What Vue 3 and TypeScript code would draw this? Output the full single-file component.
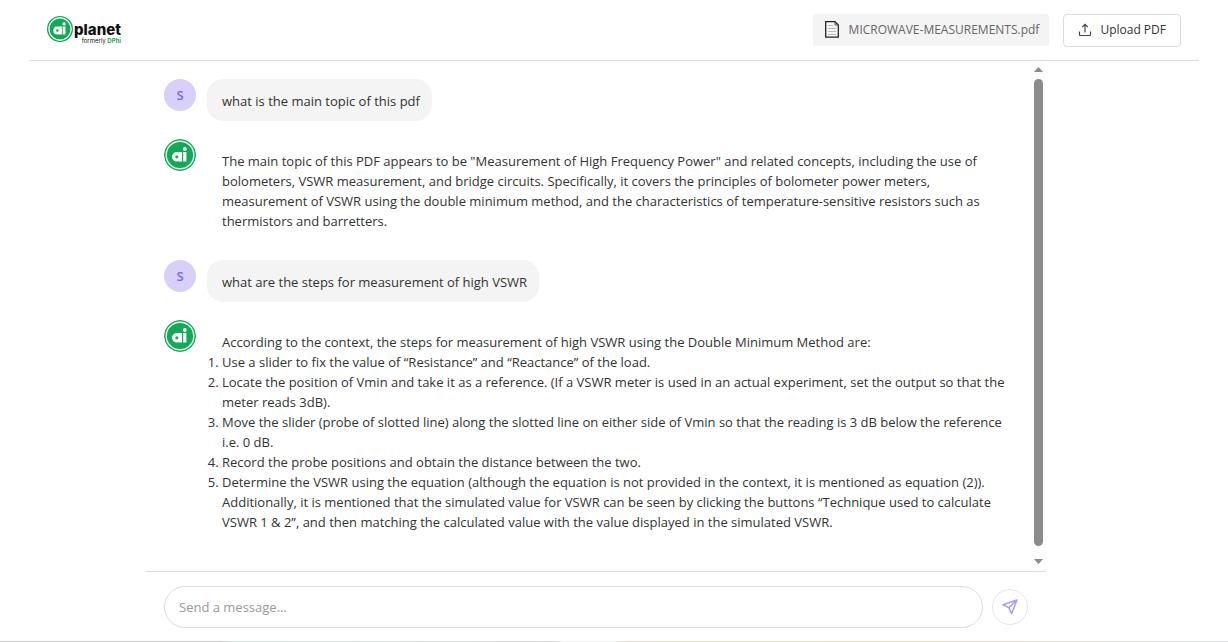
<script setup lang="ts">
import { ref } from 'vue'

interface Message {
  id: number
  from: 'user' | 'bot'
  text: string
  steps?: string[]
}

const draft = ref('')

const messages: Message[] = [
  { id: 1, from: 'user', text: 'what is the main topic of this pdf' },
  {
    id: 2,
    from: 'bot',
    text:
      'The main topic of this PDF appears to be "Measurement of High Frequency Power" and related concepts, including the use of\n' +
      'bolometers, VSWR measurement, and bridge circuits. Specifically, it covers the principles of bolometer power meters,\n' +
      'measurement of VSWR using the double minimum method, and the characteristics of temperature-sensitive resistors such as\n' +
      'thermistors and barretters.',
  },
  { id: 3, from: 'user', text: 'what are the steps for measurement of high VSWR' },
  {
    id: 4,
    from: 'bot',
    text: 'According to the context, the steps for measurement of high VSWR using the Double Minimum Method are:',
    steps: [
      'Use a slider to fix the value of “Resistance” and “Reactance” of the load.',
      'Locate the position of Vmin and take it as a reference. (If a VSWR meter is used in an actual experiment, set the output so that the\nmeter reads 3dB).',
      'Move the slider (probe of slotted line) along the slotted line on either side of Vmin so that the reading is 3 dB below the reference\ni.e. 0 dB.',
      'Record the probe positions and obtain the distance between the two.',
      'Determine the VSWR using the equation (although the equation is not provided in the context, it is mentioned as equation (2)).\nAdditionally, it is mentioned that the simulated value for VSWR can be seen by clicking the buttons “Technique used to calculate\nVSWR 1 & 2”, and then matching the calculated value with the value displayed in the simulated VSWR.',
    ],
  },
]
</script>

<template>
  <div class="page">
    <header class="topbar">
      <a class="brand" href="#" aria-label="ai planet, formerly DPhi">
        <svg class="brand-mark" viewBox="0 0 32 32" aria-hidden="true">
          <circle cx="16" cy="16" r="16" fill="#14a958" />
          <circle cx="16" cy="16" r="13.6" fill="none" stroke="#fff" stroke-width="1.5" />
          <circle cx="12.8" cy="17.8" r="3.3" fill="none" stroke="#fff" stroke-width="3.4" />
          <path d="M16.6 12.8v10M21 12.8v10" stroke="#fff" stroke-width="3.4" />
          <circle cx="21" cy="9.8" r="2" fill="#fff" />
        </svg>
        <span class="brand-words">
          <span class="brand-name">planet</span>
          <span class="brand-sub">formerly <b>DPhi</b></span>
        </span>
      </a>
      <div class="actions">
        <div class="file">
          <svg width="14" height="17" viewBox="0 0 14 17" aria-hidden="true">
            <path d="M.7.7h9.3L13.3 4v12.2H.7z" fill="#f8f8f8" stroke="#222" stroke-width="1.3" />
            <path d="M10 1v3h3" fill="none" stroke="#555" />
            <path d="M3 4.5h5M3 7.5h8M3 10.5h8M3 13.5h8" stroke="#bbb" />
          </svg>
          <span>MICROWAVE-MEASUREMENTS.pdf</span>
        </div>
        <button class="upload" type="button">
          <svg width="14" height="14" viewBox="0 0 14 14" fill="none" stroke="#444" stroke-width="1.2" aria-hidden="true">
            <path d="M7 9.5V1.5M4.2 4.2L7 1.4l2.8 2.8M1.5 8.5v3.2q0 .8.8.8h9.4q.8 0 .8-.8V8.5" />
          </svg>
          <span>Upload PDF</span>
        </button>
      </div>
    </header>

    <main class="chat">
      <section class="history">
        <div class="messages">
          <article v-for="m in messages" :key="m.id" class="message" :class="m.from">
            <span v-if="m.from === 'user'" class="avatar">S</span>
            <svg v-else class="avatar" viewBox="0 0 32 32" aria-hidden="true">
              <circle cx="16" cy="16" r="16" fill="#14a958" />
              <circle cx="16" cy="16" r="13.8" fill="none" stroke="#e8f7ee" stroke-width="1.4" />
              <circle cx="12.8" cy="17.8" r="3.2" fill="none" stroke="#fff" stroke-width="3.2" />
              <path d="M16.4 13v9.6M20.8 13v9.6" stroke="#fff" stroke-width="3.2" />
              <circle cx="20.8" cy="10" r="1.9" fill="#fff" />
            </svg>
            <div class="bubble">
              <p>{{ m.text }}</p>
              <ol v-if="m.steps">
                <li v-for="step in m.steps" :key="step">{{ step }}</li>
              </ol>
            </div>
          </article>
        </div>
        <div class="rail" aria-hidden="true">
          <svg width="9" height="5" viewBox="0 0 9 5"><path d="M4.5 0L9 5H0z" fill="#8b8b8b" /></svg>
          <div class="thumb"></div>
          <svg width="9" height="5" viewBox="0 0 9 5"><path d="M0 0h9L4.5 5z" fill="#8b8b8b" /></svg>
        </div>
      </section>

      <form class="composer" @submit.prevent>
        <input v-model="draft" type="text" placeholder="Send a message..." aria-label="Message" />
        <button class="send" type="submit" aria-label="Send">
          <svg width="16" height="16" viewBox="0 0 16 16" fill="none" stroke="#a99cff" stroke-width="1.5" stroke-linejoin="round" aria-hidden="true">
            <path d="M15 1L1 5.8l5.8 2.8L9.6 14.6zM15 1L6.800 8.6" />
          </svg>
        </button>
      </form>
    </main>
    <div class="edge" aria-hidden="true"></div>
  </div>
</template>

<style>
body {
  margin: 0;
  background: #fff;
}
</style>

<style scoped>
.page {
  display: flex;
  flex-direction: column;
  min-height: 100vh;
  font-family: 'Segoe UI', 'Open Sans', 'Noto Sans', sans-serif;
  font-size: 13px;
  line-height: 20px;
  color: #333;
}

.edge {
  height: 1px;
  background: linear-gradient(90deg, #c8c8c8 18%, #d5e3df 19%, #d5d5d5 45%, #eee 46%, #eee 50%, #e4dfcc 51%, #e4dbc8 75%, #d8dcde);
}

.topbar {
  display: flex;
  justify-content: space-between;
  align-items: center;
  height: 60px;
  margin: 0 29px;
  padding: 0 18px;
  border-bottom: 1px solid #ddd;
}

.brand {
  display: flex;
  gap: 1px;
  color: #111;
  text-decoration: none;
}

.brand-mark {
  width: 26px;
  height: 26px;
}

.brand-words {
  display: flex;
  flex-direction: column;
  align-items: flex-end;
  padding-top: 6px;
}

.brand-name {
  font: 800 15px/15px Inter, sans-serif;
}

.brand-sub {
  font: 6px/8px Inter, sans-serif;
}

.brand-sub b {
  color: #14a958;
}

.actions {
  display: flex;
  gap: 14px;
  font-size: 12px;
}

.file {
  display: flex;
  align-items: center;
  gap: 10px;
  height: 32px;
  padding: 0 10px 0 12px;
  border-radius: 3px;
  background: #f4f4f4;
  color: #666;
}

.upload {
  display: flex;
  align-items: center;
  gap: 8px;
  height: 33px;
  padding: 0 14px;
  border: 1px solid #ddd;
  border-radius: 4px;
  background: #fff;
  color: #333;
  font: inherit;
}

.chat {
  display: flex;
  flex: 1;
  flex-direction: column;
  padding: 0 182px 0 146px;
}

.history {
  display: flex;
  flex: 1;
  border-bottom: 1px solid #ddd;
}

.messages {
  flex: 1;
  padding: 18px 0 18px 18px;
}

.message {
  display: flex;
  align-items: flex-start;
  gap: 11px;
  margin-bottom: 18px;
}

.message:last-child {
  margin-bottom: 0;
}

.avatar {
  flex: none;
  width: 32px;
  height: 32px;
  border-radius: 50%;
}

.user .avatar {
  background: #d8d0f8;
  color: #7467ff;
  font-weight: 600;
  line-height: 32px;
  text-align: center;
}

.bubble {
  padding: 12px 12px 10px 15px;
  border-radius: 16px;
  white-space: pre;
}

.bot .bubble {
  padding-bottom: 11px;
}

.user .bubble {
  background: #f4f4f4;
}

.bubble p,
.bubble ol {
  margin: 0;
  padding: 0;
}

.rail {
  display: flex;
  flex-direction: column;
  align-items: center;
  gap: 7px;
  width: 15px;
  padding: 6px 0 7px;
  background: #fcfcfc;
}

.rail svg:last-child {
  margin-top: 6px;
}

.thumb {
  flex: 1;
  width: 9px;
  border-radius: 5px;
  background: #8b8b8b;
}

.composer {
  display: flex;
  align-items: center;
  gap: 9px;
  padding: 14px 18px 13px;
}

.composer input {
  flex: 1;
  min-width: 0;
  height: 42px;
  box-sizing: border-box;
  padding: 0 14px;
  border: 1px solid #ddd;
  border-radius: 21px;
  background: #fff;
  color: #333;
  font: inherit;
}

.composer input::placeholder {
  color: #999;
}

.send {
  display: grid;
  place-items: center;
  width: 36px;
  height: 36px;
  padding: 0;
  border: 1px solid #e6e6e6;
  border-radius: 50%;
  background: #fff;
}
</style>
